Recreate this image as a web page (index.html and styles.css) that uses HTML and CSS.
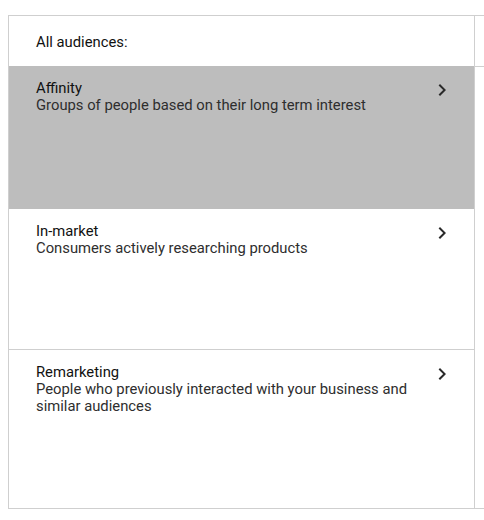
FILE: index.html
```html
<!DOCTYPE html>
<html>
<head>
<meta charset="utf-8">
<link rel="stylesheet" href="styles.css">
</head>
<body>
<div class="wrap">
  <div class="col main">
    <div class="header">All audiences:</div>
    <div class="item active">
      <div class="text">
        <div class="title">Affinity</div>
        <div class="desc">Groups of people based on their long term interest</div>
      </div>
      <svg class="chev" viewBox="0 0 24 24" width="24" height="24"><path d="M10 6L8.59 7.41 13.17 12l-4.58 4.59L10 18l6-6z"/></svg>
    </div>
    <div class="item sep">
      <div class="text">
        <div class="title">In-market</div>
        <div class="desc">Consumers actively researching products</div>
      </div>
      <svg class="chev" viewBox="0 0 24 24" width="24" height="24"><path d="M10 6L8.59 7.41 13.17 12l-4.58 4.59L10 18l6-6z"/></svg>
    </div>
    <div class="item last">
      <div class="text">
        <div class="title">Remarketing</div>
        <div class="desc">People who previously interacted with your business and similar audiences</div>
      </div>
      <svg class="chev" viewBox="0 0 24 24" width="24" height="24"><path d="M10 6L8.59 7.41 13.17 12l-4.58 4.59L10 18l6-6z"/></svg>
    </div>
  </div>
  <div class="col side">
    <div class="side-header"></div>
  </div>
</div>
</body>
</html>
```
FILE: styles.css
```css
html, body {
  margin: 0;
  padding: 0;
  background: #ffffff;
}
body {
  font-family: Roboto, "Liberation Sans", Arial, sans-serif;
  color: #212121;
}
.wrap {
  display: flex;
  padding: 15px 0 0 8px;
  height: 509px;
  box-sizing: border-box;
}
.col {
  border-top: 1px solid #cfcfcf;
  border-bottom: 1px solid #cfcfcf;
  box-sizing: border-box;
}
.main {
  width: 467px;
  border-left: 1px solid #cfcfcf;
  border-right: 1px solid #cfcfcf;
  display: flex;
  flex-direction: column;
}
.side {
  flex: 1;
}
.side-header {
  height: 50px;
  border-bottom: 1px solid #cfcfcf;
}
.header {
  height: 50px;
  box-sizing: border-box;
  padding-left: 27px;
  padding-top: 2px;
  display: flex;
  align-items: center;
  font-size: 14.8px;
  color: #111111;
}
.item {
  display: flex;
  align-items: flex-start;
  padding: 14px 20px 0 27px;
  height: 143px;
  box-sizing: border-box;
}
.item.active {
  background: #bdbdbd;
}
.item.sep {
  height: 141px;
  border-bottom: 1px solid #cfcfcf;
}
.item.last {
  flex: 1;
}
.text {
  flex: 1;
  font-size: 14.8px;
  line-height: 17px;
}
.title {
  color: #111111;
}
.desc {
  color: #2e2e2e;
}
.chev {
  flex: none;
  margin-top: -2px;
  fill: #2a2a2a;
}
```
